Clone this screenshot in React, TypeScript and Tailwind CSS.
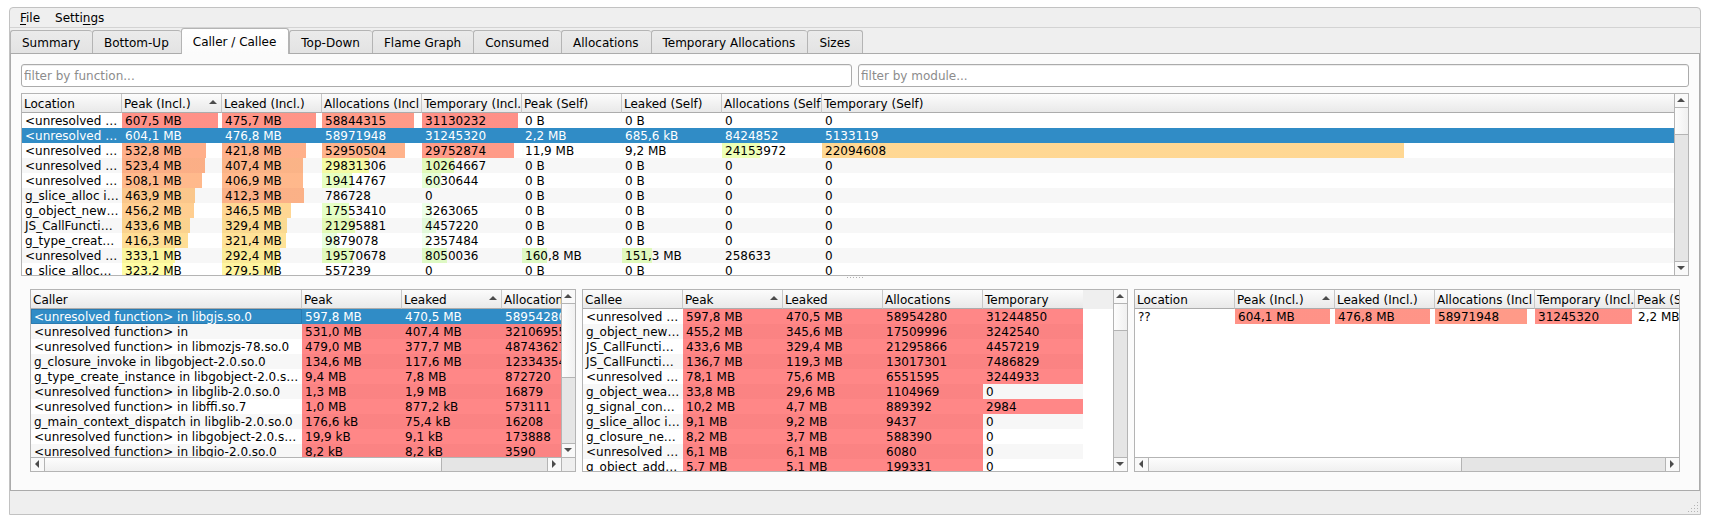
import { useState } from "react";
import { clsx } from "clsx";

type Direction = "up" | "down" | "left" | "right";

interface Column {
  label: string;
  width?: string;
  sorted?: boolean;
  // value that fills the whole cell, in bytes or calls
  max?: number;
}

interface TreeProps {
  name: string;
  columns: Column[];
  rows: string[][];
  selected?: number;
  focusCell?: boolean;
  filler?: boolean;
  vertical?: number;
  horizontal?: number;
}

const MB = 1000 * 1000;
const MAX_PEAK = 633 * MB;
const MAX_LEAKED = 504 * MB;
const MAX_ALLOCATIONS = 63900000;
const MAX_TEMPORARY = 32350000;

const TABS = [
  "Summary",
  "Bottom-Up",
  "Caller / Callee",
  "Top-Down",
  "Flame Graph",
  "Consumed",
  "Allocations",
  "Temporary Allocations",
  "Sizes",
];

const COST_COLUMNS: Column[] = [
  { label: "Location", width: "w-[100px]" },
  { label: "Peak (Incl.)", width: "w-[100px]", sorted: true, max: MAX_PEAK },
  { label: "Leaked (Incl.)", width: "w-[100px]", max: MAX_LEAKED },
  { label: "Allocations (Incl", width: "w-[100px]", max: MAX_ALLOCATIONS },
  { label: "Temporary (Incl.", width: "w-[100px]", max: MAX_TEMPORARY },
  { label: "Peak (Self)", width: "w-[100px]", max: MAX_PEAK },
  { label: "Leaked (Self)", width: "w-[100px]", max: MAX_LEAKED },
  { label: "Allocations (Self", width: "w-[100px]", max: MAX_ALLOCATIONS },
  { label: "Temporary (Self)", max: MAX_TEMPORARY },
];

const CALLER_COLUMNS: Column[] = [
  { label: "Caller", width: "w-[271px]" },
  { label: "Peak", width: "w-[100px]", max: 0 },
  { label: "Leaked", width: "w-[100px]", sorted: true, max: 0 },
  { label: "Allocations", width: "w-[100px]", max: 0 },
];

const CALLEE_COLUMNS: Column[] = [
  { label: "Callee", width: "w-[100px]" },
  { label: "Peak", width: "w-[100px]", sorted: true, max: 0 },
  { label: "Leaked", width: "w-[100px]", max: 0 },
  { label: "Allocations", width: "w-[100px]", max: 0 },
  { label: "Temporary", width: "w-[100px]", max: 0 },
];

const FUNCTIONS = [
  ["<unresolved …", "607,5 MB", "475,7 MB", "58844315", "31130232", "0 B", "0 B", "0", "0"],
  ["<unresolved …", "604,1 MB", "476,8 MB", "58971948", "31245320", "2,2 MB", "685,6 kB", "8424852", "5133119"],
  ["<unresolved …", "532,8 MB", "421,8 MB", "52950504", "29752874", "11,9 MB", "9,2 MB", "24153972", "22094608"],
  ["<unresolved …", "523,4 MB", "407,4 MB", "29831306", "10264667", "0 B", "0 B", "0", "0"],
  ["<unresolved …", "508,1 MB", "406,9 MB", "19414767", "6030644", "0 B", "0 B", "0", "0"],
  ["g_slice_alloc i…", "463,9 MB", "412,3 MB", "786728", "0", "0 B", "0 B", "0", "0"],
  ["g_object_new…", "456,2 MB", "346,5 MB", "17553410", "3263065", "0 B", "0 B", "0", "0"],
  ["JS_CallFuncti…", "433,6 MB", "329,4 MB", "21295881", "4457220", "0 B", "0 B", "0", "0"],
  ["g_type_creat…", "416,3 MB", "321,4 MB", "9879078", "2357484", "0 B", "0 B", "0", "0"],
  ["<unresolved …", "333,1 MB", "292,4 MB", "19570678", "8050036", "160,8 MB", "151,3 MB", "258633", "0"],
  ["g_slice_alloc…", "323,2 MB", "279,5 MB", "557239", "0", "0 B", "0 B", "0", "0"],
];

const CALLERS = [
  ["<unresolved function> in libgjs.so.0", "597,8 MB", "470,5 MB", "58954280"],
  ["<unresolved function> in", "531,0 MB", "407,4 MB", "32106955"],
  ["<unresolved function> in libmozjs-78.so.0", "479,0 MB", "377,7 MB", "48743627"],
  ["g_closure_invoke in libgobject-2.0.so.0", "134,6 MB", "117,6 MB", "12334354"],
  ["g_type_create_instance in libgobject-2.0.s…", "9,4 MB", "7,8 MB", "872720"],
  ["<unresolved function> in libglib-2.0.so.0", "1,3 MB", "1,9 MB", "16879"],
  ["<unresolved function> in libffi.so.7", "1,0 MB", "877,2 kB", "573111"],
  ["g_main_context_dispatch in libglib-2.0.so.0", "176,6 kB", "75,4 kB", "16208"],
  ["<unresolved function> in libgobject-2.0.s…", "19,9 kB", "9,1 kB", "173888"],
  ["<unresolved function> in libgio-2.0.so.0", "8,2 kB", "8,2 kB", "3590"],
];

const CALLEES = [
  ["<unresolved …", "597,8 MB", "470,5 MB", "58954280", "31244850"],
  ["g_object_new…", "455,2 MB", "345,6 MB", "17509996", "3242540"],
  ["JS_CallFuncti…", "433,6 MB", "329,4 MB", "21295866", "4457219"],
  ["JS_CallFuncti…", "136,7 MB", "119,3 MB", "13017301", "7486829"],
  ["<unresolved …", "78,1 MB", "75,6 MB", "6551595", "3244933"],
  ["g_object_wea…", "33,8 MB", "29,6 MB", "1104969", "0"],
  ["g_signal_con…", "10,2 MB", "4,7 MB", "889392", "2984"],
  ["g_slice_alloc i…", "9,1 MB", "9,2 MB", "9437", "0"],
  ["g_closure_ne…", "8,2 MB", "3,7 MB", "588390", "0"],
  ["<unresolved …", "6,1 MB", "6,1 MB", "6080", "0"],
  ["g_object_add…", "5,7 MB", "5,1 MB", "199331", "0"],
];

const LOCATIONS = [["??", "604,1 MB", "476,8 MB", "58971948", "31245320", "2,2 MB"]];

function parseCost(text: string) {
  const value = parseFloat(text.replace(",", "."));
  if (text.endsWith("MB")) return value * MB;
  if (text.endsWith("kB")) return value * 1000;
  return value;
}

// green for cheap, red for expensive, fading out towards zero
function costStyle(text: string, max?: number) {
  const cost = parseCost(text);
  if (max === undefined || !cost) return undefined;
  const fraction = max === 0 ? 1 : cost / max;
  const alpha = ((1 - (fraction - 1) ** 2) * 120) / 255;
  const color = `hsla(${120 - fraction * 120}, 100%, 50%, ${alpha})`;
  const stop = `${fraction * 100}%`;
  return { backgroundImage: `linear-gradient(to right, ${color} ${stop}, transparent ${stop})` };
}

const ARROWS: Record<Direction, string> = {
  up: "M0 6L4 2L8 6Z",
  down: "M0 2L8 2L4 6Z",
  left: "M6 0L6 8L2 4Z",
  right: "M2 0L6 4L2 8Z",
};

function Arrow({ direction, className }: { direction: Direction; className?: string }) {
  return (
    <svg viewBox="0 0 9 9" className={clsx("h-[9px] w-[9px] shrink-0 fill-[#4c4c4c]", className)} aria-hidden="true">
      <path d={ARROWS[direction]} />
    </svg>
  );
}

function ScrollBar({ vertical, thumb }: { vertical?: boolean; thumb: number }) {
  const size = `${thumb * 100}%`;
  const button = clsx(
    "flex shrink-0 items-center justify-center bg-[#f9f9f9]",
    vertical ? "h-[13px]" : "w-[13px]"
  );

  return (
    <div
      className={clsx(
        "flex shrink-0 border-[#b4b4b4] bg-[#e5e5e5]",
        vertical ? "w-[14px] flex-col border-l" : "h-[14px] border-t"
      )}
    >
      <button type="button" className={button} aria-label={vertical ? "Scroll up" : "Scroll left"}>
        <Arrow direction={vertical ? "up" : "left"} />
      </button>
      <div className={clsx("flex min-h-0 min-w-0 flex-1 border-[#b4b4b4]", vertical ? "flex-col border-y" : "border-x")}>
        <div
          className={clsx(
            "border-[#b4b4b4] from-[#fdfdfd] to-[#f0f0f0]",
            vertical ? "border-b bg-linear-to-r" : "border-r bg-linear-to-b"
          )}
          style={vertical ? { height: size } : { width: size }}
        />
      </div>
      <button type="button" className={button} aria-label={vertical ? "Scroll down" : "Scroll right"}>
        <Arrow direction={vertical ? "down" : "right"} />
      </button>
    </div>
  );
}

function Tree({ name, columns, rows, selected, focusCell, filler, vertical, horizontal }: TreeProps) {
  return (
    <div className="flex h-[183px] min-w-0 flex-1 flex-col border border-[#b4b4b4] bg-white">
      <div className="flex min-h-0 flex-1">
        <div className="min-w-0 flex-1 overflow-hidden">
          <table className="w-full table-fixed border-separate border-spacing-0" aria-label={name}>
            <colgroup>
              {columns.map((column) => (
                <col key={column.label} className={column.width} />
              ))}
              {filler && <col />}
            </colgroup>
            <thead>
              <tr className="h-[19px]">
                {columns.map((column, i) => (
                  <th
                    key={column.label}
                    aria-sort={column.sorted ? "descending" : undefined}
                    className={clsx(
                      "h-[19px] border-b border-b-[#acacac] bg-linear-to-b from-[#fcfcfc] to-[#e9e9e9] p-0 text-left font-normal",
                      i < columns.length - 1 && "border-r border-r-[#c8c8c8]"
                    )}
                  >
                    <div className="flex justify-between pt-0.5 pl-0.5 leading-4 whitespace-nowrap">
                      {column.label}
                      {column.sorted && <Arrow direction="up" className="mt-0.5 mr-[3px]" />}
                    </div>
                  </th>
                ))}
                {filler && <td className="bg-[#efefef]" />}
              </tr>
            </thead>
            <tbody>
              {rows.map((row, r) => (
                <tr key={r} className={clsx("h-[15px]", r === selected && "text-white")}>
                  {row.map((text, c) => (
                    <td
                      key={c}
                      className={clsx(
                        "h-[15px] p-0 pt-px pl-[3px] leading-[14px] whitespace-nowrap",
                        r === selected ? "bg-[#308cc6]" : r % 2 === 1 && "bg-[#f7f7f7]",
                        r === selected && c === 0 && focusCell && "inset-ring inset-ring-[#2a7ab0]"
                      )}
                      style={r === selected ? undefined : costStyle(text, columns[c].max)}
                    >
                      {text}
                    </td>
                  ))}
                </tr>
              ))}
            </tbody>
          </table>
        </div>
        {vertical !== undefined && <ScrollBar vertical thumb={vertical} />}
      </div>
      {horizontal !== undefined && (
        <div className="flex">
          <div className="flex min-w-0 flex-1 flex-col">
            <ScrollBar thumb={horizontal} />
          </div>
          {vertical !== undefined && <div className="w-[14px] border-t border-l border-[#b4b4b4] bg-[#efefef]" />}
        </div>
      )}
    </div>
  );
}

function FilterInput({ label }: { label: string }) {
  return (
    <input
      type="text"
      aria-label={label}
      placeholder={`${label}...`}
      className="h-[23px] min-w-0 flex-1 rounded-[3px] border border-[#ababab] bg-white px-0.5 inset-shadow-[0_1px_0_#ededed] outline-none placeholder:text-[#8c8c8c]"
    />
  );
}

// size grip in the corner of the status bar
function SizeGrip() {
  return (
    <svg viewBox="0 0 11 11" className="h-[11px] w-[11px] fill-[#b4b4b4]" aria-hidden="true">
      <path d="M9 0h1v1h-1zM6 3h1v1h-1zM9 3h1v1h-1zM3 6h1v1h-1zM6 6h1v1h-1zM9 6h1v1h-1zM0 9h1v1h-1zM3 9h1v1h-1zM6 9h1v1h-1zM9 9h1v1h-1z" />
    </svg>
  );
}

export default function App() {
  const [activeTab, setActiveTab] = useState("Caller / Callee");

  return (
    <div className="bg-white px-[9px] pt-[7px] pb-[9px] font-['DejaVu_Sans',sans-serif] text-[12px] text-black">
      <div className="rounded-t-[4px] border border-[#c2c2c2] bg-[#efefef]">
        {/* Menu */}
        <nav className="flex h-5 items-center gap-[15px] border-b border-[#d3d3d3] px-[10px]">
          <button type="button">
            <span className="underline underline-offset-2">F</span>ile
          </button>
          <button type="button">
            Setti<span className="underline underline-offset-2">n</span>gs
          </button>
        </nav>

        {/* Tabs */}
        <div role="tablist" className="flex items-end">
          {TABS.map((tab) => {
            const active = tab === activeTab;
            return (
              <button
                key={tab}
                type="button"
                role="tab"
                aria-selected={active}
                onClick={() => setActiveTab(tab)}
                className={clsx(
                  "rounded-t-[3px] border-t border-l border-[#b4b4b4] pr-3 pl-[11px] last:border-r",
                  active
                    ? "relative -mb-px h-[26px] border-r bg-linear-to-b from-white to-[#fbfbfb]"
                    : "h-[23px] bg-linear-to-b from-[#ebebeb] to-[#e3e3e3] pt-0.5"
                )}
              >
                {tab}
              </button>
            );
          })}
        </div>

        {/* Caller / Callee page */}
        <main className="border border-[#ababab] bg-[#fbfbfb] px-[10px] pt-[10px] pb-[18px]">
          <div className="mb-1.5 flex gap-1.5">
            <FilterInput label="filter by function" />
            <FilterInput label="filter by module" />
          </div>
          <div className="flex">
            <Tree name="Functions" columns={COST_COLUMNS} rows={FUNCTIONS} selected={1} vertical={0.176} />
          </div>
          <div className="flex h-[13px] justify-center gap-0.5 pt-px">
            {[0, 1, 2, 3, 4, 5].map((dot) => (
              <span key={dot} className="h-px w-px bg-[#b0b0b0]" />
            ))}
          </div>
          <div className="flex gap-1.5 px-[9px]">
            <Tree
              name="Callers"
              columns={CALLER_COLUMNS}
              rows={CALLERS}
              selected={0}
              focusCell
              vertical={0.53}
              horizontal={0.79}
            />
            <Tree name="Callees" columns={CALLEE_COLUMNS} rows={CALLEES} filler vertical={0.176} />
            <Tree name="Locations" columns={COST_COLUMNS.slice(0, 6)} rows={LOCATIONS} horizontal={0.606} />
          </div>
        </main>

        {/* Status bar */}
        <footer className="flex h-[23px] items-end justify-end pr-px pb-px">
          <SizeGrip />
        </footer>
      </div>
    </div>
  );
}
